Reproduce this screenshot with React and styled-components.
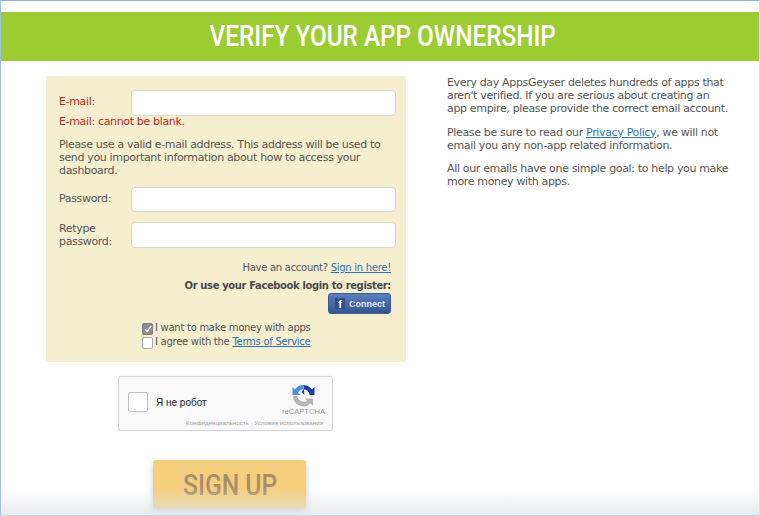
import React from 'react'
import styled, { createGlobalStyle } from 'styled-components'

const Global = createGlobalStyle`
  html, body { margin: 0; padding: 0; background: #fff; }
  body { font-family: "DejaVu Sans", Verdana, sans-serif; font-size: 11px; line-height: 13px; letter-spacing: -0.34px; color: #555; }
`

const Page = styled.div`
  position: relative;
  width: 760px;
  height: 516px;
  box-sizing: border-box;
  overflow: hidden;
  border-top: 1px solid #8fb2cf;
  border-left: 1px solid #a3c0d8;
  border-right: 1px solid #d5e2ec;
  border-bottom: 1px solid #c8d8e2;
  padding-top: 11px;
`

const Banner = styled.h1`
  box-sizing: border-box;
  margin: 0;
  height: 49px;
  padding-left: 6px;
  background: #9bcd32;
  color: #fff;
  font-family: Roboto, "Liberation Sans", sans-serif;
  font-size: 30px;
  font-weight: 500;
  line-height: 48px;
  letter-spacing: 0;
  text-align: center;
`

const Squeezed = styled.span`
  display: inline-block;
  white-space: nowrap;
  transform: scaleX(${p => p.$x});
  transform-origin: ${p => (p.$left ? 'left' : 'center')};
`

const Columns = styled.div`
  display: grid;
  grid-template-columns: 360px 284px;
  column-gap: 41px;
  padding: 15px 0 0 45px;
`

const FormColumn = styled.div`
  display: flex;
  flex-direction: column;
`

const Panel = styled.form`
  box-sizing: border-box;
  height: 286px;
  background: #f5eecf;
  border-radius: 2px;
  padding: 14px 10px 0 13px;
`

const Row = styled.div`
  display: grid;
  grid-template-columns: 72px 265px;
  align-items: center;
  margin-bottom: ${p => p.$gap}px;
`

const Label = styled.label`
  color: ${p => (p.$error ? '#c0281e' : '#555')};
  margin-top: ${p => p.$lift}px;
`

const Input = styled.input`
  box-sizing: border-box;
  width: 265px;
  height: ${p => p.$h}px;
  background: #fff;
  border: 1px solid #dad7c8;
  border-radius: 4px;
  outline: none;
`

const ErrorText = styled.div`
  color: #c0281e;
  margin: -1px 0 10px;
`

const Help = styled.p`
  margin: 0 0 10px;
  width: 335px;
`

const RightLine = styled.div`
  text-align: right;
  padding-right: 5px;
  margin-top: ${p => p.$top}px;
  font-size: 10px;
  letter-spacing: -0.27px;
`

const Link = styled.a`
  color: #2f72b5;
  text-decoration: underline;
`

const Strong = styled.b`
  color: #4a4a4a;
  font-weight: 700;
  letter-spacing: -0.38px;
`

const ConnectRow = styled.div`
  display: flex;
  justify-content: flex-end;
  padding-right: 5px;
  margin-top: 1px;
`

const Connect = styled.button`
  display: flex;
  align-items: center;
  gap: 4px;
  box-sizing: border-box;
  width: 63px;
  height: 21px;
  padding: 0 0 0 6px;
  border: 1px solid #3b5a94;
  border-radius: 3px;
  background: linear-gradient(#5b7fbd, #33558f);
  color: #dfe7f6;
  font-family: "Liberation Sans", Arial, sans-serif;
  font-size: 9px;
  font-weight: 700;
  letter-spacing: 0;
`

const FbBox = styled.span`
  width: 10px;
  height: 11px;
  background: #2f5089;
  color: #fff;
  font-family: "Liberation Sans", Arial, sans-serif;
  font-size: 11px;
  font-weight: 700;
  line-height: 12px;
  text-align: center;
`

const Checks = styled.div`
  display: flex;
  flex-direction: column;
  gap: 1px;
  padding-left: 83px;
  margin-top: 7px;
  font-size: 10px;
  letter-spacing: -0.27px;
`

const CheckRow = styled.label`
  display: flex;
  align-items: center;
  gap: 2px;
  height: 13px;
`

const Box = styled.span`
  box-sizing: border-box;
  display: flex;
  align-items: center;
  justify-content: center;
  width: 11px;
  height: 12px;
  margin-top: 2px;
  border-radius: 2px;
  border: 1px solid ${p => (p.$on ? '#7f7f7f' : '#a8a8a8')};
  background: ${p => (p.$on ? '#8e8e8e' : '#fff')};
`

const Captcha = styled.div`
  box-sizing: border-box;
  position: relative;
  display: flex;
  align-items: center;
  width: 215px;
  height: 55px;
  margin: 14px 0 0 72px;
  padding: 0 0 3px 9px;
  background: #f9f9f9;
  border: 1px solid #d6d6d6;
  border-radius: 3px;
  box-shadow: 0 0 2px rgba(0, 0, 0, 0.08);
`

const CaptchaBox = styled.span`
  box-sizing: border-box;
  width: 20px;
  height: 20px;
  background: #fff;
  border: 1px solid #c1c1c1;
  border-radius: 2px;
`

const CaptchaText = styled.span`
  margin-left: 8px;
  color: #222;
  font-family: "Liberation Sans", Arial, sans-serif;
  font-size: 10px;
  letter-spacing: 0;
`

const CaptchaLogo = styled.div`
  position: absolute;
  top: 7px;
  right: 7px;
  display: flex;
  flex-direction: column;
  align-items: center;
  color: #9a9a9a;
  font-family: "Liberation Sans", Arial, sans-serif;
  font-size: 7.6px;
  line-height: 9px;
  letter-spacing: 0;
`

const CaptchaFoot = styled.div`
  position: absolute;
  right: 9px;
  bottom: 3px;
  color: #9d9d9d;
  font-family: "Liberation Sans", Arial, sans-serif;
  font-size: 6.2px;
  line-height: 8px;
  letter-spacing: 0;
`

const SignUp = styled.button`
  width: 153px;
  height: 48px;
  margin: 29px 0 0 107px;
  padding: 0;
  background: #f5cf7c;
  border: none;
  border-radius: 3px;
  box-shadow: 0 3px 6px rgba(0, 0, 0, 0.22);
  display: flex;
  align-items: center;
  justify-content: center;
`

const SignUpText = styled.span`
  box-sizing: border-box;
  display: block;
  width: 96px;
  height: 41px;
  border: 1px solid #ecd193;
  color: #a78e6e;
  font-family: Roboto, "Liberation Sans", sans-serif;
  font-size: 29px;
  font-weight: 500;
  line-height: 40px;
  text-align: left;
  letter-spacing: 0;
`

const Aside = styled.div`
  padding-top: 0;
`

const Para = styled.p`
  margin: 0 0 10.5px;
`

const BottomFade = styled.div`
  position: absolute;
  left: 0;
  right: 0;
  bottom: 0;
  height: 28px;
  background: linear-gradient(rgba(225, 225, 225, 0), rgba(222, 226, 228, 0.7));
  pointer-events: none;
`

const App = () => (
  <Page>
    <Global />
    <Banner><Squeezed $x={0.81}>VERIFY YOUR APP OWNERSHIP</Squeezed></Banner>
    <Columns>
      <FormColumn>
        <Panel>
          <Row $gap={0}>
            <Label $error $lift={-4}>E-mail:</Label>
            <Input $h={26} />
          </Row>
          <ErrorText>E-mail: cannot be blank.</ErrorText>
          <Help>
            Please use a valid e-mail address. This address will be used to send you important
            information about how to access your dashboard.
          </Help>
          <Row $gap={10}>
            <Label $lift={-2}>Password:</Label>
            <Input $h={25} />
          </Row>
          <Row $gap={0}>
            <Label $lift={0}>Retype password:</Label>
            <Input $h={26} />
          </Row>
          <RightLine $top={13}>
            Have an account? <Link>Sign in here!</Link>
          </RightLine>
          <RightLine $top={5}>
            <Strong>Or use your Facebook login to register:</Strong>
          </RightLine>
          <ConnectRow>
            <Connect type="button">
              <FbBox>f</FbBox>
              Connect
            </Connect>
          </ConnectRow>
          <Checks>
            <CheckRow>
              <Box $on>
                <svg width="8" height="8" viewBox="0 0 8 8">
                  <path d="M1 4.2 3.2 6.5 7 1.2" fill="none" stroke="#fff" strokeWidth="1.4" />
                </svg>
              </Box>
              I want to make money with apps
            </CheckRow>
            <CheckRow>
              <Box />
              <span>I agree with the <Link>Terms of Service</Link></span>
            </CheckRow>
          </Checks>
        </Panel>
        <Captcha>
          <CaptchaBox />
          <CaptchaText>Я не робот</CaptchaText>
          <CaptchaLogo>
            <svg width="23" height="23" viewBox="0 0 24 24">
              <path d="M12 1a11 11 0 0 0-9 4.6L0.5 3v8.5H9L6.3 8.8A7 7 0 0 1 12 5.5z" fill="#4a90e2" />
              <path d="M12 1a11 11 0 0 1 10.9 10.5h-4.4A7 7 0 0 0 12 5.5l-2 3 3 3h0z" fill="#1c3aa9" />
              <path d="M23.5 11.5V3L21 5.5l-4 2 2 4z" fill="#1c3aa9" />
              <path d="M1 12.5h4.5a7 7 0 0 0 10.4 5l-2.4-2.5H22l0 0.5V23l-2.6-2.6A11 11 0 0 1 1 12.5z" fill="#b4b4b4" />
            </svg>
            reCAPTCHA
          </CaptchaLogo>
          <CaptchaFoot>Конфиденциальность · Условия использования</CaptchaFoot>
        </Captcha>
        <SignUp type="button">
          <SignUpText><Squeezed $x={0.85} $left>SIGN UP</Squeezed></SignUpText>
        </SignUp>
      </FormColumn>
      <Aside>
        <Para>
          Every day AppsGeyser deletes hundreds of apps that aren't verified. If you are serious
          about creating an app empire, please provide the correct email account.
        </Para>
        <Para>
          Please be sure to read our <Link>Privacy Policy</Link>, we will not email you any non-app
          related information.
        </Para>
        <Para>
          All our emails have one simple goal: to help you make more money with apps.
        </Para>
      </Aside>
    </Columns>
    <BottomFade />
  </Page>
)

export default App
